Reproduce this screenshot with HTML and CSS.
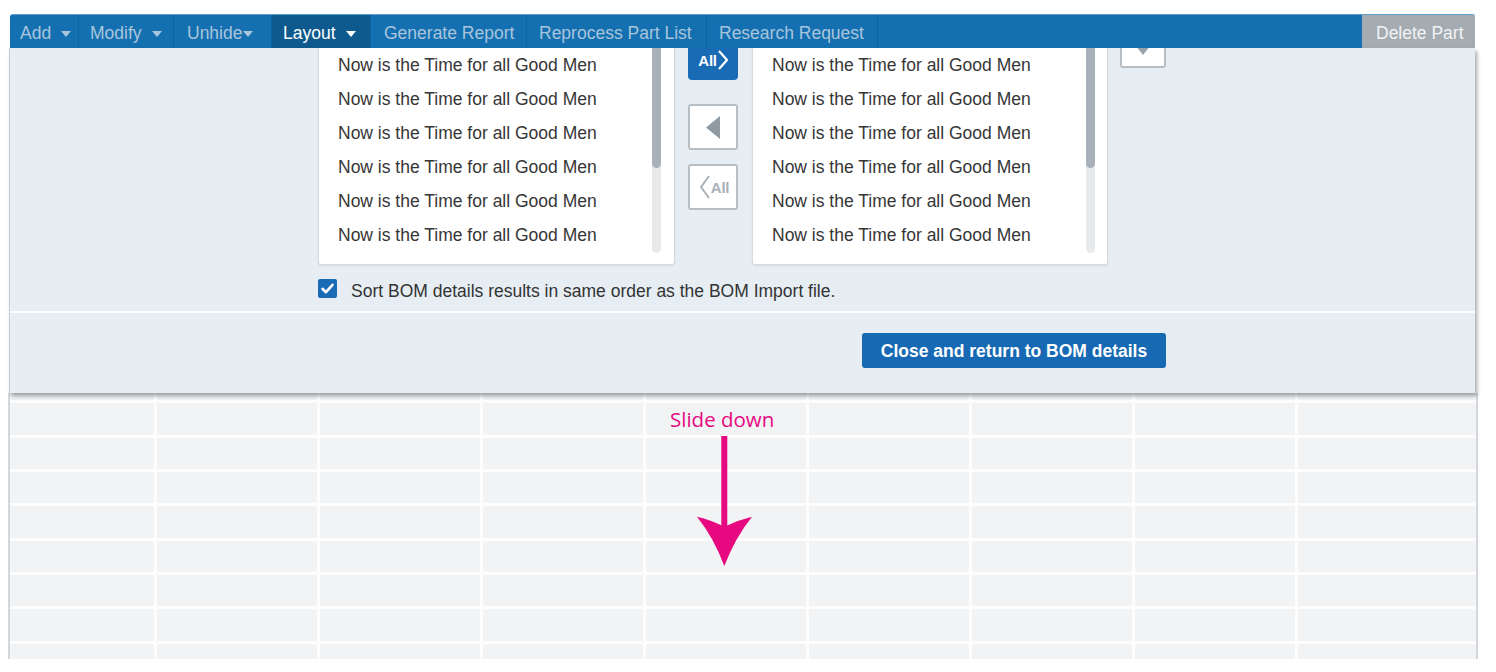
FILE: index.html
```html
<!DOCTYPE html>
<html lang="en">
<head>
<meta charset="utf-8">
<title>BOM details – Layout</title>
<link rel="stylesheet" href="styles.css">
</head>
<body>
<div class="app">
  <nav class="toolbar">
    <button class="tb-item tb-add">Add<span class="caret"></span></button>
    <button class="tb-item tb-modify">Modify<span class="caret"></span></button>
    <button class="tb-item tb-unhide">Unhide<span class="caret caret-tight"></span></button>
    <button class="tb-item tb-layout tb-active">Layout<span class="caret"></span></button>
    <button class="tb-item tb-generate">Generate Report</button>
    <button class="tb-item tb-reprocess">Reprocess Part List</button>
    <button class="tb-item tb-research">Research Request</button>
    <span class="tb-spacer"></span>
    <button class="tb-item tb-delete">Delete Part</button>
  </nav>

  <section class="panel">
    <div class="panel-body">
      <div class="transfer">
        <div class="listbox">
          <ul class="list-items">
            <li>Now is the Time for all Good Men</li>
            <li>Now is the Time for all Good Men</li>
            <li>Now is the Time for all Good Men</li>
            <li>Now is the Time for all Good Men</li>
            <li>Now is the Time for all Good Men</li>
            <li>Now is the Time for all Good Men</li>
          </ul>
          <div class="scrollbar"><div class="thumb"></div></div>
        </div>

        <div class="mover">
          <button class="mv-btn mv-primary">
            <span class="mv-label">All</span>
            <svg class="mv-chev" width="12" height="22" viewBox="0 0 12 22"><polyline points="2,2 10,11 2,20" fill="none" stroke="#ffffff" stroke-width="2.2" stroke-linejoin="round"/></svg>
          </button>
          <button class="mv-btn mv-step">
            <svg width="14" height="23" viewBox="0 0 14 23"><polygon points="14,0 0,11.5 14,23" fill="#8f9aa3"/></svg>
          </button>
          <button class="mv-btn mv-all-left">
            <svg class="mv-chev" width="11" height="26" viewBox="0 0 11 26"><polyline points="10,2 2,13 10,24" fill="none" stroke="#a9b0b7" stroke-width="2" stroke-linejoin="round"/></svg>
            <span class="mv-label mv-label-muted">All</span>
          </button>
        </div>

        <div class="listbox listbox-right">
          <ul class="list-items">
            <li>Now is the Time for all Good Men</li>
            <li>Now is the Time for all Good Men</li>
            <li>Now is the Time for all Good Men</li>
            <li>Now is the Time for all Good Men</li>
            <li>Now is the Time for all Good Men</li>
            <li>Now is the Time for all Good Men</li>
          </ul>
          <div class="scrollbar"><div class="thumb"></div></div>
        </div>

        <div class="order">
          <button class="mv-btn order-btn">
            <svg width="22" height="14" viewBox="0 0 22 14"><polygon points="0,0 22,0 11,14" fill="#98a2aa"/></svg>
          </button>
        </div>
      </div>

      <label class="check-row">
        <span class="checkbox">
          <svg width="19" height="19" viewBox="0 0 19 19"><path d="M4.5 9.8 L8 13.2 L14.5 5.8" fill="none" stroke="#ffffff" stroke-width="2.6" stroke-linecap="round" stroke-linejoin="round"/></svg>
        </span>
        <span class="check-label">Sort BOM details results in same order as the BOM Import file.</span>
      </label>
    </div>

    <div class="panel-footer">
      <button class="primary-btn">Close and return to BOM details</button>
    </div>
  </section>

  <div class="grid">
    <div class="cell"></div><div class="cell"></div><div class="cell"></div><div class="cell"></div><div class="cell"></div><div class="cell"></div><div class="cell"></div><div class="cell"></div><div class="cell"></div>
    <div class="cell"></div><div class="cell"></div><div class="cell"></div><div class="cell"></div><div class="cell"></div><div class="cell"></div><div class="cell"></div><div class="cell"></div><div class="cell"></div>
    <div class="cell"></div><div class="cell"></div><div class="cell"></div><div class="cell"></div><div class="cell"></div><div class="cell"></div><div class="cell"></div><div class="cell"></div><div class="cell"></div>
    <div class="cell"></div><div class="cell"></div><div class="cell"></div><div class="cell"></div><div class="cell"></div><div class="cell"></div><div class="cell"></div><div class="cell"></div><div class="cell"></div>
    <div class="cell"></div><div class="cell"></div><div class="cell"></div><div class="cell"></div><div class="cell"></div><div class="cell"></div><div class="cell"></div><div class="cell"></div><div class="cell"></div>
    <div class="cell"></div><div class="cell"></div><div class="cell"></div><div class="cell"></div><div class="cell"></div><div class="cell"></div><div class="cell"></div><div class="cell"></div><div class="cell"></div>
    <div class="cell"></div><div class="cell"></div><div class="cell"></div><div class="cell"></div><div class="cell"></div><div class="cell"></div><div class="cell"></div><div class="cell"></div><div class="cell"></div>
    <div class="cell"></div><div class="cell"></div><div class="cell"></div><div class="cell"></div><div class="cell"></div><div class="cell"></div><div class="cell"></div><div class="cell"></div><div class="cell"></div>
    <div class="cell"></div><div class="cell"></div><div class="cell"></div><div class="cell"></div><div class="cell"></div><div class="cell"></div><div class="cell"></div><div class="cell"></div><div class="cell"></div>

    <div class="slide-note">Slide down</div>
    <svg class="slide-arrow" width="56" height="131" viewBox="0 0 56 131">
      <rect x="24.3" y="0" width="6" height="96" fill="#e6097f"/>
      <path d="M0 80.7 Q14 84 27.3 90.7 Q41 84 55 80.7 Q38 102 27.3 130 Q17 102 0 80.7 Z" fill="#e6097f"/>
    </svg>
  </div>
</div>
</body>
</html>
```

FILE: styles.css
```css
* { box-sizing: border-box; }

body {
  margin: 0;
  background: #ffffff;
  font-family: "Liberation Sans", Arial, sans-serif;
  font-size: 17.5px;
  color: #333333;
}

.app { padding-top: 14px; }

/* ---------- toolbar ---------- */
.toolbar {
  display: flex;
  margin-left: 10px;
  width: 1465px;
  height: 34px;
  background: #1470b0;
  border-top: 1px solid #5f9dcb;
  border-radius: 3px 3px 0 0;
}

.tb-item {
  display: flex;
  align-items: center;
  flex: none;
  height: 100%;
  padding: 3px 0 0 12px;
  border: 0;
  border-right: 1px solid #11639e;
  background: transparent;
  color: #a9c5dc;
  font: inherit;
  white-space: nowrap;
  cursor: pointer;
}
.tb-add      { width: 69px;  padding-left: 10px; }
.tb-modify   { width: 95px;  padding-left: 11px; }
.tb-unhide   { width: 98px;  padding-left: 13px; }
.tb-layout   { width: 99px;  padding-left: 11px; }
.tb-generate { width: 156px; padding-left: 13px; }
.tb-reprocess{ width: 180px; padding-left: 12px; }
.tb-research { width: 171px; padding-left: 12px; }

.tb-active { background: #0e5a8e; color: #ffffff; }

.tb-spacer { flex: 1; }

.tb-delete {
  width: 113px;
  padding-left: 14px;
  background: #a4abb1;
  color: #f2f4f5;
  border-right: 0;
}

.caret {
  width: 0;
  height: 0;
  margin-left: 10px;
  margin-top: 1px;
  border-left: 5.5px solid transparent;
  border-right: 5.5px solid transparent;
  border-top: 6px solid currentColor;
}
.caret-tight { margin-left: 1px; }

/* ---------- panel ---------- */
.panel {
  position: relative;
  z-index: 1;
  margin-left: 9px;
  width: 1466px;
  height: 345px;
  background: #e6eef4;
  border-left: 1px solid #c5ced5;
  box-shadow: 2px 3px 4px rgba(0, 0, 0, 0.35);
  overflow: hidden;
}

.panel-body {
  padding-left: 308px;
  padding-bottom: 9px;
  border-bottom: 2px solid #fbfdfe;
}

.transfer {
  display: flex;
  margin-top: -34px;
  height: 251px;
}

.listbox {
  display: flex;
  width: 357px;
  height: 100%;
  background: #ffffff;
  border: 1px solid #d3dae0;
  border-radius: 3px;
  box-shadow: 0 1px 2px rgba(0, 0, 0, 0.08);
}
.listbox-right { width: 356px; margin-left: 14px; }

.list-items {
  flex: 1;
  list-style: none;
  margin: 0;
  padding: 33px 0 0 19px;
}
.list-items li {
  height: 34px;
  line-height: 34px;
  white-space: nowrap;
  color: #363636;
}

.scrollbar {
  width: 9px;
  margin: 0 13px 11px 0;
  background: #e7e9eb;
  border-radius: 0 0 5px 5px;
}
.listbox-right .scrollbar { margin-right: 12px; }
.thumb {
  height: 153px;
  background: #a8b1b9;
  border-radius: 0 0 5px 5px;
}

.mover {
  display: flex;
  flex-direction: column;
  width: 50px;
  margin-left: 13px;
  padding-top: 20px;
}

.mv-btn {
  display: flex;
  align-items: center;
  justify-content: center;
  width: 50px;
  height: 46px;
  padding: 0;
  background: #ffffff;
  border: 2px solid #b7bec4;
  border-radius: 3px;
  cursor: pointer;
  font: inherit;
}
.mv-primary {
  padding-top: 6px;
  padding-left: 1px;
  background: #1a6bb5;
  border-color: #1a6bb5;
  border-radius: 4px;
}
.mv-step { margin-top: 24px; }
.mv-all-left { margin-top: 14px; padding-left: 2px; }

.mv-label {
  font-weight: bold;
  font-size: 15px;
  letter-spacing: -0.3px;
  color: #ffffff;
}
.mv-label-muted { font-size: 15px; color: #a9b0b7; margin-left: 1px; padding-top: 1px; }
.mv-chev { display: block; }

.order {
  margin-left: 12px;
  padding-top: 7px;
}
.order-btn {
  width: 46px;
  height: 47px;
  align-items: flex-start;
  padding-top: 18px;
}

.check-row {
  display: flex;
  align-items: flex-start;
  margin-top: 14px;
  height: 23px;
}
.checkbox {
  width: 19px;
  height: 19px;
  background: #1a6bb5;
  border-radius: 2px;
  flex: none;
}
.checkbox svg { display: block; }
.check-label {
  margin-left: 14px;
  padding-top: 2px;
  line-height: 20px;
  color: #333333;
}

.panel-footer {
  display: flex;
  justify-content: flex-end;
  width: 1156px;
  padding-top: 20px;
}

.primary-btn {
  width: 304px;
  height: 35px;
  padding-top: 2px;
  background: #1769b4;
  border: 0;
  border-radius: 3px;
  color: #ffffff;
  font: bold 17.5px "Liberation Sans", Arial, sans-serif;
  cursor: pointer;
}

/* ---------- grid below ---------- */
.grid {
  position: relative;
  margin-left: 8px;
  width: 1470px;
  display: grid;
  grid-template-columns: 144px repeat(7, 160px) 178px;
  grid-template-rows: 7px 32px 31px 31px 32px 31px 31px 32px 15px;
  gap: 3px;
  background: #fdfdfe;
  border-left: 2px solid #d3d6da;
  border-right: 2px solid #d3d6da;
}
.cell { background: #f2f3f5; }

.slide-note {
  position: absolute;
  left: 660px;
  top: 14px;
  color: #e6097f;
  font-family: "Open Sans", "Noto Sans", sans-serif;
  font-size: 20.5px;
  line-height: 24px;
  white-space: nowrap;
}
.slide-arrow {
  position: absolute;
  left: 687px;
  top: 43px;
}
```
